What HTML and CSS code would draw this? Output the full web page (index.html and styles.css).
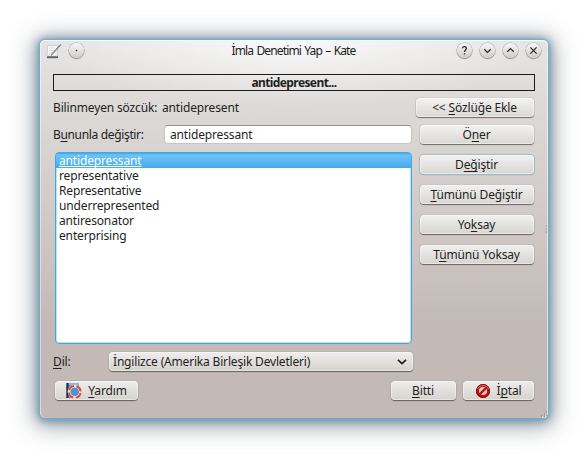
FILE: index.html
```html
<!DOCTYPE html>
<html lang="tr">
<head>
<meta charset="utf-8">
<title>İmla Denetimi Yap – Kate</title>
<link rel="stylesheet" href="styles.css">
</head>
<body>
<main class="window">
  <header class="titlebar">
    <svg class="app-icon" width="16" height="16" viewBox="0 0 16 16">
      <path d="M1.5 1.5H12L11 12H1z" fill="#f8f9fc" stroke="#c8c9d0" stroke-width=".9"/>
      <path d="M3 4h6M3 6.5h5M3 9h4" stroke="#d5dcec"/>
      <path d="M15 .8L6.5 10.3L5.3 11.3L6 9.6L14 .8z" fill="#bbb" stroke="#77777a" stroke-width=".8"/>
      <path d="M1 12.5h11v1.3H1z" fill="#222b32"/>
      <path d="M1 14.2h10" stroke="#aaa" stroke-width=".6"/>
    </svg>
    <span class="round"><svg width="15" height="15" viewBox="0 0 15 15"><circle cx="7.5" cy="7.5" r=".8" fill="#222"/></svg></span>
    <h1 class="title">İmla Denetimi Yap – Kate</h1>
    <span class="round"><svg width="15" height="15" viewBox="0 0 15 15"><path d="M5.5 5.2C5.7 3.2 9.4 3.2 9.4 5.3C9.4 7 7.5 6.9 7.5 9M7.5 10.2v1.4"/></svg></span>
    <span class="round"><svg width="15" height="15" viewBox="0 0 15 15"><path d="M4.3 6.2L7.5 9.4L10.7 6.2"/></svg></span>
    <span class="round"><svg width="15" height="15" viewBox="0 0 15 15"><path d="M4.3 8.8L7.5 5.6L10.7 8.8"/></svg></span>
    <span class="round"><svg width="15" height="15" viewBox="0 0 15 15"><path d="M4.4 4.4L10.6 10.6M10.6 4.4L4.4 10.6"/></svg></span>
  </header>
  <div class="context"><span>antidepresent...</span></div>
  <div class="row unknown">
    <span class="label unknown-label">Bilinmeyen sözcük:</span>
    <span class="word">antidepresent</span>
    <button class="btn add"><span>&lt;&lt; <u>S</u>özlüğe Ekle</span></button>
  </div>
  <div class="columns">
    <section class="left">
      <div class="row">
        <span class="label replace-label">B<u>u</u>nunla değiştir:</span>
        <div class="input"><span>antidepressant</span></div>
      </div>
      <ul class="list">
        <li class="selected"><span>antidepressant</span></li>
        <li><span>representative</span></li>
        <li><span>Representative</span></li>
        <li><span>underrepresented</span></li>
        <li><span>antiresonator</span></li>
        <li><span>enterprising</span></li>
      </ul>
      <div class="row language">
        <span class="label lang-label"><u>D</u>il:</span>
        <div class="btn combo"><span>İngilizce (Amerika Birleşik Devletleri)</span>
          <svg width="10" height="8" viewBox="0 0 10 8"><path d="M1 1.8L5 5.6L9 1.8"/></svg></div>
      </div>
    </section>
    <nav class="actions">
      <button class="btn"><span>Ö<u>n</u>er</span></button>
      <button class="btn default"><span>D<u>eğ</u>iştir</span></button>
      <button class="btn"><span><u>T</u>ümünü Değiştir</span></button>
      <button class="btn"><span>Yo<u>k</u>say</span></button>
      <button class="btn"><span>T<u>ü</u>münü Yoksay</span></button>
    </nav>
    <svg class="splitter" width="3" height="9" viewBox="0 0 3 9"><path d="M1 1h1M1 4h1M1 7h1" stroke="#777"/><path d="M2 2h1M2 5h1M2 8h1" stroke="#eee"/></svg>
  </div>
  <footer class="footer">
    <button class="btn help">
      <svg width="16" height="16" viewBox="0 0 16 16">
        <path d="M1 0h12v15H1z" fill="#4b9ad6"/><path d="M3 0h10v2H3z" fill="#83bde6"/><path d="M.3 0h2.2v15H.3z" fill="#26303a"/>
        <circle cx="8.7" cy="8.8" r="5.7" fill="#4995d6" stroke="#f6e4e0" stroke-width="2.8"/>
        <circle cx="8.7" cy="8.8" r="5.9" fill="none" stroke="#dc4a35" stroke-width="2" stroke-dasharray="6.8 2.47" stroke-dashoffset="-1.2"/>
      </svg>
      <span><u>Y</u>ardım</span></button>
    <button class="btn done"><span><u>B</u>itti</span></button>
    <button class="btn cancel">
      <svg width="16" height="16" viewBox="0 0 16 16">
        <circle cx="8" cy="8" r="7" fill="#b5120c"/><circle cx="8" cy="8" r="6.5" fill="none" stroke="#8e0d0a"/>
        <circle cx="8" cy="8" r="4.1" fill="#d8cbc8"/><path d="M4.6 11.4L11.4 4.6" stroke="#bb1710" stroke-width="2.4"/>
        <path d="M2.5 6C4 1.5 12 1.5 13.5 6" fill="none" stroke="#e8807a" stroke-width=".9"/>
      </svg>
      <span>İ<u>p</u>tal</span></button>
  </footer>
  <svg class="grip" width="8" height="8" viewBox="0 0 8 8"><path d="M1 6h1M4 6h1M4 4h1M6 2h1M6 5h1" stroke="#777"/><path d="M2 7h1M5 7h1M5 5h1M7 3h1" stroke="#f4f4f4"/></svg>
</main>
</body>
</html>
```

FILE: styles.css
```css
* { box-sizing: border-box; }
body {
  margin: 0;
  padding: 40px;
  background: #fff;
  font: 12px/15px "Noto Sans", "Open Sans", sans-serif;
  letter-spacing: -.15px;
  color: #221f1e;
  overflow: hidden;
}
u { text-decoration: underline; text-underline-offset: 2px; text-decoration-thickness: 1px; text-decoration-skip-ink: none; }
.window {
  position: relative;
  width: 508px;
  height: 378px;
  padding: 0 13px;
  border-radius: 5px;
  background:
    radial-gradient(ellipse 250px 66px at 50% 0, rgba(255,255,255,.8), rgba(255,255,255,0)),
    linear-gradient(#e6e5e4 0, #dcd9d7 70px, #c3bab7 285px, #c3bab7);
  box-shadow: inset 0 1px #f8f8f8, inset -1px 0 rgba(255,255,255,.55), inset 1px 0 rgba(255,255,255,.45),
    0 0 2px 1px #6eaed0, 0 1px 8px 2px rgba(70,125,160,.7), 0 3px 22px 6px rgba(70,80,90,.5);
}
.titlebar { display: flex; align-items: center; height: 34px; margin: 0 -6px 0 -7px; padding-bottom: 13px; gap: 8px; }
.app-icon { margin: 2px -1px 0 0; }
.round {
  display: flex;
  width: 15px; height: 15px;
  border-radius: 50%;
  background: linear-gradient(#f7f7f6, #cfcdcb);
  box-shadow: 0 0 0 .6px #a5a29f, 0 1px 1px rgba(0,0,0,.4);
}
.round path { fill: none; stroke: #2b2b2b; stroke-width: 1.3; }
.title { flex: 1; margin: 0 0 0 46px; text-align: center; font-size: 12px; font-weight: 400; letter-spacing: -.86px; word-spacing: 1px; }
.context { height: 17px; border: 1px solid #1d1b1b; text-align: center; font-weight: 700; letter-spacing: -.6px; }
.row { display: flex; align-items: center; }
.unknown { height: 20px; margin-top: 6px; }
.unknown-label { width: 109px; }
.word { flex: 1; }
.btn {
  display: flex; align-items: center; justify-content: center;
  height: 19px;
  padding: 0;
  border: 0;
  border-radius: 4px;
  font: inherit;
  letter-spacing: inherit;
  color: inherit;
  background: linear-gradient(rgba(247,247,247,.85), rgba(218,216,211,.8));
  box-shadow: inset 0 0 0 1px rgba(255,255,255,.45), 0 0 1px 0 #777, 0 1px 1px rgba(0,0,0,.5);
}
.default { box-shadow: inset 0 0 0 1px rgba(255,255,255,.45), 0 0 1px 1px #9dbcc8, 0 1px 1px rgba(60,90,100,.5); }
.add { width: 118px; margin-right: 1.5px; }
.columns { position: relative; display: flex; justify-content: space-between; margin-top: 8px; height: 247px; }
.left { width: 359px; }
.replace-label { width: 111px; letter-spacing: -.34px; }
.input {
  flex: 1; height: 19px; padding: 2px 5px;
  background: #fff; border: 1px solid #c8c5c2; border-top-color: #95918f; border-radius: 4px;
}
.input span { display: block; margin-top: -1px; }
.list {
  height: 192px; width: 357px;
  margin: 8px 0 0 2px;
  padding: 1px 1px;
  list-style: none;
  background: #fff;
  border: 1px solid #43a7dd;
  border-radius: 4px;
  box-shadow: inset 0 0 0 1px #b9e4fa;
}
.list li { height: 15px; padding-left: 2px; }
.list .selected {
  margin: -1px -1px 0; padding-left: 3px; height: 15px;
  background: linear-gradient(#45abe4 0, #6cc2f8 15%, #46abe8);
  color: #fff;
  text-decoration: underline; text-underline-offset: 1px; text-decoration-thickness: 1px; text-decoration-skip-ink: none;
}
.language { margin-top: 8px; height: 19px; }
.lang-label { width: 56px; }
.combo { flex: 1; margin-right: -1px; padding: 0 6px 0 4px; justify-content: space-between; letter-spacing: -.18px; }
.combo path { fill: none; stroke: #222; stroke-width: 1.8; }
.actions { display: grid; width: 114px; margin-right: 1.5px; row-gap: 11px; align-content: start; }
.splitter { position: absolute; right: -13px; top: 100px; }
.footer { display: flex; margin-top: 9px; padding: 0 1.5px 0 2px; gap: 7px; }
.footer .btn { height: 19px; gap: 6px; }
.help { width: 83px; }
.done { width: 65px; margin-left: auto; }
.cancel { width: 71px; }
.grip { position: absolute; right: 0; bottom: 0; }
```
